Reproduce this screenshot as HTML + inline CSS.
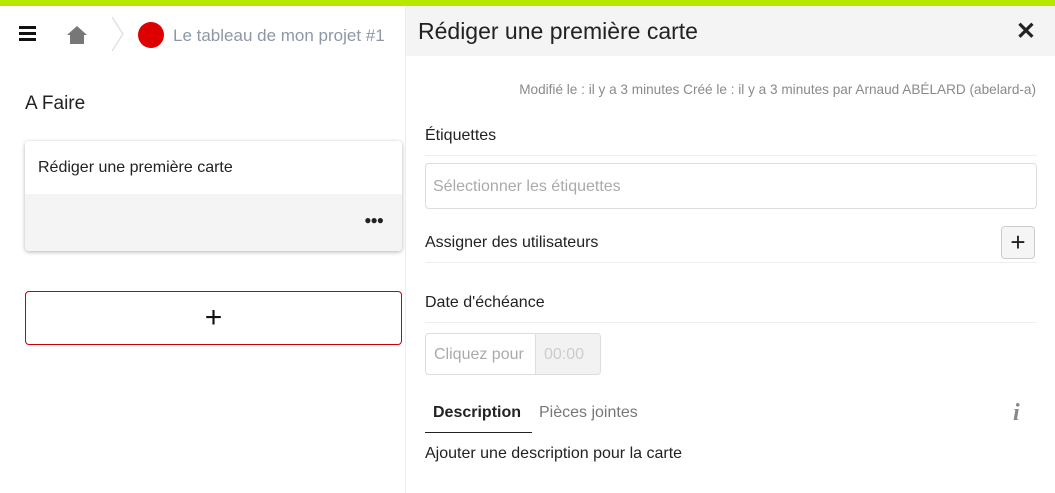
<!DOCTYPE html>
<html><head><meta charset="utf-8"><style>
*{box-sizing:border-box;margin:0;padding:0}
body{width:1055px;height:493px;overflow:hidden;background:#fff;font-family:"Liberation Sans",sans-serif;position:relative;color:#222}
.abs{position:absolute}
</style></head><body>
<div class="abs" style="left:0;top:0;width:1055px;height:6px;background:#b9e800"></div>
<div class="abs" style="left:19px;top:26px;width:17px;height:3px;background:#111;box-shadow:0 6px 0 #111,0 12px 0 #111"></div>
<svg class="abs" style="left:66px;top:25px" width="22" height="20" viewBox="0 0 22 20"><path d="M11 1 L21 10 H18 V19 H4 V10 H1 Z" fill="#777"/></svg>
<svg class="abs" style="left:110px;top:16px" width="16" height="36"><path d="M2 1 L13 18 L2 35" stroke="#ddd" fill="none" stroke-width="1.2"/></svg>
<div class="abs" style="left:138px;top:22px;width:26px;height:26px;border-radius:50%;background:#d00"></div>
<div class="abs" style="left:173px;top:26px;font-size:17px;color:#8d97a8">Le tableau de mon projet #1</div>
<div class="abs" style="left:25px;top:93px;font-size:19px;color:#222">A Faire</div>
<div class="abs" style="left:25px;top:141px;width:377px;height:110px;border-radius:4px;box-shadow:0 1px 4px rgba(0,0,0,.3);overflow:hidden">
<div style="height:53px;background:#fff;padding:18px 13px;font-size:16px">Rédiger une première carte</div>
<div style="height:57px;background:#f4f4f4;position:relative"><span style="position:absolute;right:19px;top:19px;font-size:12px;font-weight:bold;letter-spacing:-1px">●●●</span></div>
</div>
<div class="abs" style="left:25px;top:291px;width:377px;height:54px;border:1px solid #c00;border-radius:4px;text-align:center;font-size:30px;line-height:52px;color:#111">+</div>
<div class="abs" style="left:405px;top:6px;width:650px;height:487px;border-left:1px solid #eee;background:#fff">
<div style="height:50px;background:#f4f4f4;position:relative">
<div class="abs" style="left:12px;top:12px;font-size:23px;color:#222">Rédiger une première carte</div>
<div class="abs" style="right:19px;top:11px;font-size:24px;font-weight:bold">✕</div>
</div>
<div class="abs" style="right:19px;top:76px;font-size:13.6px;color:#8a8a8a">Modifié le : il y a 3 minutes Créé le : il y a 3 minutes par Arnaud ABÉLARD (abelard-a)</div>
<div class="abs" style="left:19px;top:121px;font-size:16px">Étiquettes</div>
<div class="abs" style="left:19px;top:149px;width:612px;border-top:1px solid #eee"></div>
<div class="abs" style="left:19px;top:157px;width:612px;height:46px;border:1px solid #ddd;border-radius:4px;padding:14px 7px;font-size:16px;color:#aaa">Sélectionner les étiquettes</div>
<div class="abs" style="left:19px;top:228px;font-size:16px">Assigner des utilisateurs</div>
<div class="abs" style="left:595px;top:220px;width:34px;height:33px;border:1px solid #ccc;border-radius:4px;background:#f5f5f5;text-align:center;font-size:26px;line-height:30px">+</div>
<div class="abs" style="left:19px;top:256px;width:612px;border-top:1px solid #eee"></div>
<div class="abs" style="left:19px;top:288px;font-size:16px">Date d'échéance</div>
<div class="abs" style="left:19px;top:316px;width:612px;border-top:1px solid #eee"></div>
<div class="abs" style="left:19px;top:327px;width:176px;height:42px;border:1px solid #ddd;border-radius:4px;overflow:hidden;display:flex;font-size:16px;color:#aaa">
<div style="width:110px;padding:12px 8px;white-space:nowrap;overflow:hidden;border-right:1px solid #ddd">Cliquez pour</div>
<div style="flex:1;background:#f2f2f2;padding:12px 8px;color:#ccc">00:00</div></div>
<div class="abs" style="left:27px;top:398px;font-size:16px;font-weight:bold">Description</div>
<div class="abs" style="left:133px;top:398px;font-size:16px;color:#777">Pièces jointes</div>
<div class="abs" style="left:19px;top:426px;width:107px;border-top:1px solid #222"></div>
<div class="abs" style="left:607px;top:394px;font-size:24px;font-style:italic;font-weight:bold;font-family:'Liberation Serif',serif;color:#888">i</div>
<div class="abs" style="left:19px;top:439px;font-size:16px">Ajouter une description pour la carte</div>
</div>
</body></html>
